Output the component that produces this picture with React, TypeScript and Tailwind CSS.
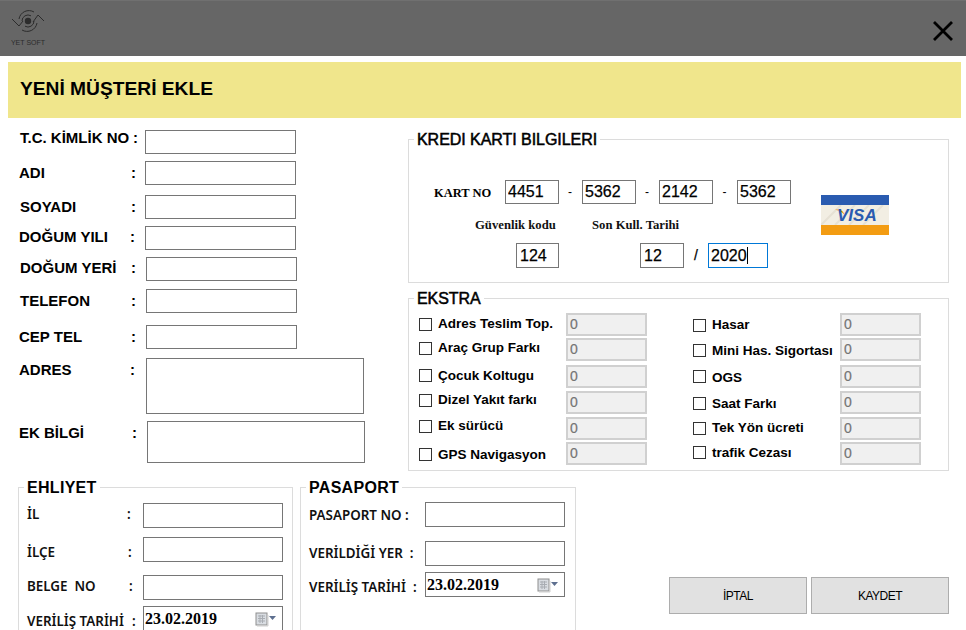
const sans = "[font-family:'Liberation_Sans',Arial,sans-serif]";
const serif = "[font-family:'Liberation_Serif','Times_New_Roman',serif]";
const tahoma = "[font-family:'Noto_Sans',Tahoma,sans-serif]";

const inputBase = "block border border-[#767676] bg-white outline-none";

const customerRows = [
  { label: "T.C. KİMLİK NO", top: "mt-[12px]", col: "w-[145px] pl-[20px]", colon: "w-[12px]", text: "-mt-[1px]", box: "w-[151px] h-[24px]" },
  { label: "ADI", top: "mt-[7px]", col: "w-[145px] pl-[19px]", colon: "w-[14px]", text: "mt-[3px]", box: "w-[151px] h-[24px]" },
  { label: "SOYADI", top: "mt-[10px]", col: "w-[145px] pl-[20px]", colon: "w-[14px]", text: "mt-[3px]", box: "w-[151px] h-[24px]" },
  { label: "DOĞUM YILI", top: "mt-[7px]", col: "w-[145px] pl-[19px]", colon: "w-[15px]", text: "mt-[2px]", box: "w-[151px] h-[24px]" },
  { label: "DOĞUM YERİ", top: "mt-[7px]", col: "w-[146px] pl-[20px]", colon: "w-[15px]", text: "mt-[2px]", box: "w-[151px] h-[24px]" },
  { label: "TELEFON", top: "mt-[8px]", col: "w-[146px] pl-[20px]", colon: "w-[15px]", text: "mt-[3px]", box: "w-[151px] h-[24px]" },
  { label: "CEP TEL", top: "mt-[12px]", col: "w-[146px] pl-[19px]", colon: "w-[15px]", text: "mt-[3px]", box: "w-[151px] h-[24px]" },
  { label: "ADRES", top: "mt-[9px]", col: "w-[146px] pl-[19px]", colon: "w-[16px]", text: "mt-[3px]", box: "w-[218px] h-[56px]" },
  { label: "EK BİLGİ", top: "mt-[7px]", col: "w-[147px] pl-[19px]", colon: "w-[15px]", text: "mt-[3px]", box: "w-[218px] h-[42px]" },
];

const extrasLeft = [
  { label: "Adres Teslim Top.", top: "mt-[6px]", check: "mt-[5px]", text: "mt-[3px]" },
  { label: "Araç Grup Farkı", top: "mt-[2px]", check: "mt-[4px]", text: "mt-[2px]" },
  { label: "Çocuk Koltugu", top: "mt-[4px]", check: "mt-[4px]", text: "mt-[3px]" },
  { label: "Dizel Yakıt farkı", top: "mt-[3px]", check: "mt-[3px]", text: "mt-[1px]" },
  { label: "Ek sürücü", top: "mt-[3px]", check: "mt-[3px]", text: "mt-[1px]" },
  { label: "GPS Navigasyon", top: "mt-[2px]", check: "mt-[6px]", text: "mt-[5px]" },
];

const extrasRight = [
  { label: "Hasar", top: "mt-[6px]", check: "mt-[6px]", text: "mt-[4px]" },
  { label: "Mini Has. Sigortası", top: "mt-[2px]", check: "mt-[6px]", text: "mt-[5px]" },
  { label: "OGS", top: "mt-[4px]", check: "mt-[5px]", text: "mt-[5px]" },
  { label: "Saat Farkı", top: "mt-[3px]", check: "mt-[6px]", text: "mt-[5px]" },
  { label: "Tek Yön ücreti", top: "mt-[3px]", check: "mt-[5px]", text: "mt-[3px]" },
  { label: "trafik Cezası", top: "mt-[2px]", check: "mt-[4px]", text: "mt-[3px]" },
];

const licenceRows = [
  { label: "İL", top: "mt-[7px]", colon: "w-[16px]", text: "mt-[2px]" },
  { label: "İLÇE", top: "mt-[9px]", colon: "w-[15px]", text: "mt-[6px]" },
  { label: "BELGE  NO", top: "mt-[13px]", colon: "w-[14px]", text: "mt-[2px]" },
];

function Logo() {
  return (
    <div className="ml-[11px] mt-[8px] flex w-[34px] flex-col items-center">
      <svg width="34" height="24" viewBox="0 0 34 24" fill="none" stroke="#2c2c2c" strokeWidth="1">
        <circle cx="17" cy="12" r="3.200" fill="#2c2c2c" stroke="none" />
        <path d="M11 12a6 6 0 0 1 9-5.200" />
        <path d="M23 12a6 6 0 0 1-9 5.200" />
        <path d="M8 10a10 10 0 0 1 15-7" />
        <path d="M26 14a10 10 0 0 1-15 7" />
        <path d="M1 10l7 7 4-5" />
        <path d="M22 13l5-7 6 6" />
      </svg>
      <span className={`${sans} mt-[5px] whitespace-nowrap text-[7px] leading-[9px] text-[#2c2c2c]`}>YET SOFT</span>
    </div>
  );
}

function Legend({ children, bold }: { children: string; bold?: boolean }) {
  return (
    <legend className={`${sans} ${bold ? "ml-[5px] font-bold tracking-[0.3px]" : "ml-[5px] tracking-[-0.05px] [-webkit-text-stroke:0.5px_#000]"} px-[3px] text-[16px] leading-[18px] text-black`}>
      <span className="block translate-y-[1px]">{children}</span>
    </legend>
  );
}

function CalendarField() {
  return (
    <div className={`${inputBase} flex h-[25px] w-[140px] items-start justify-between pl-[1px] pr-[6px]`}>
      <span className={`${serif} text-[16px] font-bold leading-[24px] text-black`}>23.02.2019</span>
      <svg className="mt-[5px]" width="21" height="15" viewBox="0 0 21 15">
        <rect x="1" y="1" width="11" height="12" fill="#d9dde2" stroke="#8f8f8f" />
        <path d="M3 4h7M3 6.500h7M3 9h7M5 3v8M7.500 3v8" stroke="#a9adb3" strokeWidth="1" />
        <path d="M2 14h11V3" fill="none" stroke="#cfcfcf" />
        <path d="M14 4h7l-3.500 4z" fill="#5d6f8f" />
      </svg>
    </div>
  );
}

function ExtraColumn({ rows, className }: { rows: typeof extrasLeft; className: string }) {
  return (
    <div className={className}>
      {rows.map((r) => (
        <div key={r.label} className={`flex items-start ${r.top}`}>
          <input type="checkbox" readOnly className={`${r.check} h-[13px] w-[13px] shrink-0 appearance-none border border-[#333333] bg-white`} />
          <label className={`${sans} ${r.text} ml-[6px] w-[128px] shrink-0 whitespace-nowrap text-[13.5px] font-bold leading-[16px] text-black`}>{r.label}</label>
          <input
            readOnly
            value="0"
            className={`${sans} h-[23px] w-[81px] border-2 border-[#d0d0d0] bg-[#f0f0f0] pl-[2px] pb-[1px] text-[14px] text-[#757575] outline-none [-webkit-text-stroke:0.2px_#757575]`}
          />
        </div>
      ))}
    </div>
  );
}

export default function App() {
  return (
    <div className="h-[630px] w-[966px] overflow-hidden bg-white">
      <header className="flex h-[56px] items-start justify-between border-t border-[#707070] bg-[#666666]">
        <Logo />
        <button className="mr-[12px] mt-[19px]" aria-label="Kapat">
          <svg width="22" height="22" viewBox="0 0 22 22" fill="none" stroke="#000" strokeWidth="2.800">
            <path d="M2 2l18 18M20 2L2 20" />
          </svg>
        </button>
      </header>

      <div className="ml-[8px] mt-[6px] flex h-[56px] w-[953px] items-center bg-[#f0e68c] pb-[2px] pl-[12px]">
        <h1 className={`${sans} text-[19.2px] font-bold text-black`}>YENİ MÜŞTERİ EKLE</h1>
      </div>

      <div className="flex">
        {/* Customer fields */}
        <div className="w-[408px] shrink-0">
          {customerRows.map((r) => (
            <div key={r.label} className={`flex items-start ${r.top}`}>
              <div className={`${sans} ${r.col} ${r.text} flex shrink-0 justify-between text-[15px] font-bold leading-[18px] text-black`}>
                <span className="whitespace-nowrap">{r.label}</span>
                <span className={r.colon}>:</span>
              </div>
              <input readOnly className={`${inputBase} ${r.box}`} />
            </div>
          ))}
        </div>

        <div className="w-[541px] shrink-0 pt-[12px]">
          {/* Card details */}
          <fieldset className="h-[153px] border border-[#dcdcdc]">
            <Legend>KREDI KARTI BILGILERI</Legend>
            <div className="flex">
              <div className="w-[382px] shrink-0 pt-[32px]">
                <div className="flex items-center pl-[25px]">
                  <span className={`${serif} w-[71px] pt-[2px] text-[12.5px] font-bold text-black`}>KART NO</span>
                  <input readOnly value="4451" className={`${inputBase} ${sans} h-[24px] w-[54px] pl-[2px] text-[16px] text-black [-webkit-text-stroke:0.25px_#000]`} />
                  <span className={`${sans} w-[23px] pr-[1px] text-center text-[12px] text-black`}>-</span>
                  <input readOnly value="5362" className={`${inputBase} ${sans} h-[24px] w-[54px] pl-[2px] text-[16px] text-black [-webkit-text-stroke:0.25px_#000]`} />
                  <span className={`${sans} w-[23px] pr-[1px] text-center text-[12px] text-black`}>-</span>
                  <input readOnly value="2142" className={`${inputBase} ${sans} h-[24px] w-[54px] pl-[2px] text-[16px] text-black [-webkit-text-stroke:0.25px_#000]`} />
                  <span className={`${sans} w-[24px] pr-[1px] text-center text-[12px] text-black`}>-</span>
                  <input readOnly value="5362" className={`${inputBase} ${sans} h-[24px] w-[54px] pl-[2px] text-[16px] text-black [-webkit-text-stroke:0.25px_#000]`} />
                </div>
                <div className={`${serif} mt-[13px] flex text-[12.7px] font-bold leading-[16px] text-[#111111]`}>
                  <span className="ml-[66px] w-[117px]">Güvenlik kodu</span>
                  <span>Son Kull. Tarihi</span>
                </div>
                <div className={`${sans} mt-[10px] flex items-center text-[16px] text-black [-webkit-text-stroke:0.25px_#000]`}>
                  <input readOnly value="124" className={`${inputBase} ml-[107px] h-[25px] w-[43px] pl-[3px]`} />
                  <input readOnly value="12" className={`${inputBase} ml-[81px] h-[25px] w-[44px] pl-[3px]`} />
                  <span className="w-[24px] text-center text-[14px]">/</span>
                  <div className="flex h-[25px] w-[60px] items-center border border-[#0078d7] pl-[2px]">
                    2020
                    <span className="h-[17px] w-px bg-black" />
                  </div>
                </div>
              </div>
              <svg className="ml-[30px] mt-[47px]" width="68" height="40" viewBox="0 0 68 40">
                <rect width="68" height="40" fill="#f2eee3" />
                <path d="M0 30L20 10M14 30L34 10M28 30L48 10M42 30L62 10" stroke="#e6e1d4" strokeWidth="2" />
                <rect width="68" height="10" fill="#2a5bb0" />
                <rect y="30" width="68" height="10" fill="#f39c12" />
                <path d="M14 14.500c5-.5 8 .5 10 6-2-3-6-5-10-6z" fill="#f39c12" />
                <text x="16" y="25.500" fontFamily="Liberation Sans" fontSize="17" fontWeight="700" fontStyle="italic" fill="#2a5bb0">VISA</text>
              </svg>
            </div>
          </fieldset>

          {/* Extras */}
          <fieldset className="mt-[6px] h-[182px] border border-[#dcdcdc]">
            <Legend>EKSTRA</Legend>
            <div className="flex">
              <ExtraColumn rows={extrasLeft} className="w-[274px] shrink-0 pl-[10px]" />
              <ExtraColumn rows={extrasRight} className="shrink-0 pl-[10px]" />
            </div>
          </fieldset>
        </div>
      </div>

      <div className="mt-[7px] flex items-start">
        {/* Driving licence */}
        <fieldset className="ml-[18px] h-[170px] w-[275px] shrink-0 border border-[#dcdcdc]">
          <Legend bold>EHLIYET</Legend>
          <div className={`${tahoma} text-[13.4px] font-semibold leading-[18px] text-[#111111]`}>
            {licenceRows.map((r) => (
              <div key={r.label} className={`flex items-start ${r.top}`}>
                <div className={`${r.text} flex w-[124px] shrink-0 justify-between pl-[8px]`}>
                  <span className="whitespace-pre">{r.label}</span>
                  <span className={r.colon}>:</span>
                </div>
                <input readOnly className={`${inputBase} h-[25px] w-[140px]`} />
              </div>
            ))}
            <div className="mt-[6px] flex items-start">
              <div className="mt-[6px] flex w-[124px] shrink-0 justify-between pl-[8px]">
                <span className="whitespace-nowrap">VERİLİŞ TARİHİ</span>
                <span className="w-[11px]">:</span>
              </div>
              <CalendarField />
            </div>
          </div>
        </fieldset>

        {/* Passport */}
        <fieldset className="ml-[7px] h-[170px] w-[276px] shrink-0 border border-[#dcdcdc]">
          <Legend bold>PASAPORT</Legend>
          <div className={`${tahoma} text-[13.4px] font-semibold leading-[18px] text-[#111111]`}>
            <div className="mt-[6px] flex items-start">
              <span className="mt-[4px] w-[124px] shrink-0 whitespace-pre pl-[8px]">PASAPORT NO :</span>
              <input readOnly className={`${inputBase} h-[25px] w-[140px]`} />
            </div>
            <div className="mt-[14px] flex items-start">
              <span className="mt-[3px] w-[124px] shrink-0 whitespace-pre pl-[8px]">VERİLDİĞİ YER  :</span>
              <input readOnly className={`${inputBase} h-[25px] w-[140px]`} />
            </div>
            <div className="mt-[6px] flex items-start">
              <span className="mt-[6px] w-[124px] shrink-0 whitespace-pre pl-[8px]">VERİLİŞ TARİHİ  :</span>
              <CalendarField />
            </div>
          </div>
        </fieldset>

        <div className={`${sans} ml-[93px] mt-[99px] flex gap-[4px] text-[12px] tracking-[-0.5px] text-black`}>
          <button className="h-[37px] w-[138px] border border-[#adadad] bg-[#e1e1e1]">İPTAL</button>
          <button className="h-[37px] w-[138px] border border-[#adadad] bg-[#e1e1e1]">KAYDET</button>
        </div>
      </div>
    </div>
  );
}
